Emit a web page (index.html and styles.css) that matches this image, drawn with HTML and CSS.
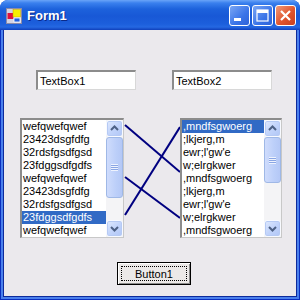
FILE: index.html
```html
<!DOCTYPE html>
<html lang="en">
<head>
    <meta charset="UTF-8">
    <title>Form1</title>
    <link rel="stylesheet" href="styles.css">
</head>
<body>
    <div class="window">
        <!-- Title bar -->
        <div class="titlebar">
            <svg class="app-icon" width="16" height="16" viewBox="0 0 16 16">
                <rect x="0.5" y="0.5" width="15" height="15" fill="#d4d4e4" stroke="#8a8aa8"/>
                <rect x="1.5" y="5" width="6" height="6" fill="#e0103c"/>
                <rect x="7" y="1.5" width="7.5" height="7.5" fill="#f8f000" stroke="#c0a000" stroke-width="0.5"/>
                <rect x="8" y="10" width="6" height="4" fill="#2060e0" stroke="#ffffff" stroke-width="0.8"/>
            </svg>
            <span class="title">Form1</span>
            <div class="caption-buttons">
                <div class="cap-btn">
                    <svg width="21" height="21" viewBox="0 0 21 21"><rect x="5" y="13" width="7" height="3" fill="#fff"/></svg>
                </div>
                <div class="cap-btn">
                    <svg width="21" height="21" viewBox="0 0 21 21"><rect x="5" y="5" width="11" height="11" fill="none" stroke="#fff" stroke-width="1.2"/><rect x="5" y="5" width="11" height="3" fill="#fff"/></svg>
                </div>
                <div class="cap-btn close">
                    <svg width="21" height="21" viewBox="0 0 21 21"><path d="M6 6 L15 15 M15 6 L6 15" stroke="#fff" stroke-width="2.2"/></svg>
                </div>
            </div>
        </div>

        <!-- Frame + client area -->
        <div class="frame">
            <div class="client">
                <div class="row-text">
                    <div class="textbox">TextBox1</div>
                    <div class="textbox">TextBox2</div>
                </div>

                <div class="row-lists">
                    <div class="listbox">
                        <div class="items">
                            <div class="item">wefqwefqwef</div>
                            <div class="item">23423dsgfdfg</div>
                            <div class="item">32rdsfgsdfgsd</div>
                            <div class="item">23fdggsdfgdfs</div>
                            <div class="item">wefqwefqwef</div>
                            <div class="item">23423dsgfdfg</div>
                            <div class="item">32rdsfgsdfgsd</div>
                            <div class="item selected">23fdggsdfgdfs</div>
                            <div class="item">wefqwefqwef</div>
                        </div>
                        <div class="scrollbar">
                            <div class="sb-btn">
                                <svg width="15" height="15" viewBox="0 0 15 15"><polyline points="4,9 7.5,5.5 11,9" fill="none" stroke="#4d6185" stroke-width="2"/></svg>
                            </div>
                            <div class="sb-track">
                                <div class="sb-thumb thumb-long"><span class="grip"></span></div>
                            </div>
                            <div class="sb-btn">
                                <svg width="15" height="15" viewBox="0 0 15 15"><polyline points="4,6 7.5,9.5 11,6" fill="none" stroke="#4d6185" stroke-width="2"/></svg>
                            </div>
                        </div>
                    </div>

                    <svg class="links" width="56" height="120" viewBox="0 0 56 120">
                        <line x1="1" y1="7" x2="56" y2="54"/>
                        <line x1="1" y1="97" x2="56" y2="9"/>
                        <line x1="1" y1="59" x2="56" y2="100"/>
                    </svg>

                    <div class="listbox narrow">
                        <div class="items">
                            <div class="item selected">,mndfsgwoerg</div>
                            <div class="item">;lkjerg,m</div>
                            <div class="item">ewr;l'gw'e</div>
                            <div class="item">w;elrgkwer</div>
                            <div class="item">,mndfsgwoerg</div>
                            <div class="item">;lkjerg,m</div>
                            <div class="item">ewr;l'gw'e</div>
                            <div class="item">w;elrgkwer</div>
                            <div class="item">,mndfsgwoerg</div>
                        </div>
                        <div class="scrollbar">
                            <div class="sb-btn">
                                <svg width="15" height="15" viewBox="0 0 15 15"><polyline points="4,9 7.5,5.5 11,9" fill="none" stroke="#4d6185" stroke-width="2"/></svg>
                            </div>
                            <div class="sb-track">
                                <div class="sb-thumb thumb-short"><span class="grip"></span></div>
                            </div>
                            <div class="sb-btn">
                                <svg width="15" height="15" viewBox="0 0 15 15"><polyline points="4,6 7.5,9.5 11,6" fill="none" stroke="#4d6185" stroke-width="2"/></svg>
                            </div>
                        </div>
                    </div>
                </div>

                <div class="row-button">
                    <div class="button"><span class="focus">Button1</span></div>
                </div>
            </div>
        </div>
    </div>
</body>
</html>
```

FILE: styles.css
```css
body {
    margin: 0;
    padding: 0;
    font-family: 'Liberation Sans', Arial, sans-serif;
    font-size: 11px;
    background-color: #ffffff;
}

.window {
    width: 300px;
    height: 300px;
    display: flex;
    flex-direction: column;
    border-radius: 8px 8px 0 0;
    overflow: hidden;
    background-color: #0a3fcf;
}

/* Title bar */
.titlebar {
    height: 30px;
    flex: none;
    display: flex;
    align-items: center;
    padding: 0 4px 0 6px;
    background: linear-gradient(#6aa4f8 0px, #3a80ee 3px, #1d62dc 9px, #1858d6 16px, #1c5fdc 24px, #2568e2 27px, #0f3fba 30px);
}

.app-icon {
    flex: none;
    margin-top: 1px;
}

.title {
    flex: 1;
    margin-left: 5px;
    color: #ffffff;
    font-family: 'Liberation Sans', Arial, sans-serif;
    font-weight: bold;
    font-size: 13px;
    text-shadow: 1px 1px 0 #0a2a8a;
}

.caption-buttons {
    display: flex;
    gap: 2px;
    margin-top: 1px;
}

.cap-btn {
    width: 21px;
    height: 21px;
    box-sizing: border-box;
    border: 1px solid #ffffff;
    border-radius: 3px;
    background: linear-gradient(135deg, #7aa6f4, #3a74e8 60%, #2f63d8);
    display: flex;
    align-items: center;
    justify-content: center;
}

.cap-btn svg {
    flex: none;
}

.cap-btn.close {
    background: linear-gradient(135deg, #f09a78, #e0552e 55%, #c8401e);
}

/* Window frame */
.frame {
    flex: 1;
    display: flex;
    border: 1px solid #0a2fc0;
    border-top: none;
    padding: 0 2px 2px 2px;
    background-color: #4a80ec;
}

.client {
    flex: 1;
    display: flex;
    flex-direction: column;
    border: 1px solid #0c2a9c;
    border-top: none;
    background-color: #ebe9ed;
}

/* Text boxes */
.row-text {
    display: flex;
    gap: 36px;
    margin-top: 40px;
    padding-left: 32px;
}

.textbox {
    width: 100px;
    height: 20px;
    box-sizing: border-box;
    background-color: #ffffff;
    border-style: solid;
    border-width: 2px 1px 1px 2px;
    border-color: #8c8c8c #d8d8d8 #d8d8d8 #8c8c8c;
    padding: 2px 0 0 2px;
    color: #000000;
    line-height: 14px;
}

/* List boxes */
.row-lists {
    display: flex;
    margin-top: 28px;
    padding-left: 16px;
}

.listbox {
    width: 104px;
    height: 120px;
    box-sizing: border-box;
    display: flex;
    background-color: #ffffff;
    border-style: solid;
    border-width: 2px 1px 1px 2px;
    border-color: #8c8c8c #c8c8c8 #c8c8c8 #8c8c8c;
}

.listbox.narrow {
    width: 102px;
}

.items {
    flex: 1;
    overflow: hidden;
}

.item {
    height: 13px;
    line-height: 13px;
    padding-left: 1px;
    white-space: nowrap;
    color: #000000;
}

.item.selected {
    background-color: #316ac5;
    color: #ffffff;
}

.scrollbar {
    width: 17px;
    flex: none;
    display: flex;
    flex-direction: column;
    background-color: #f4f4f6;
}

.sb-btn {
    height: 17px;
    box-sizing: border-box;
    border: 1px solid #f8faff;
    border-radius: 3px;
    background: linear-gradient(135deg, #e0eafe, #c2d4fb 50%, #b0c6f6);
    box-shadow: inset 0 0 0 1px #b6caf4;
    display: flex;
    align-items: center;
    justify-content: center;
}

.sb-track {
    flex: 1;
    display: flex;
    flex-direction: column;
}

.sb-thumb {
    box-sizing: border-box;
    border: 1px solid #9fb8e6;
    border-radius: 3px;
    background: linear-gradient(90deg, #cfdcfc, #bccff9 60%, #b4c8f6);
    display: flex;
    align-items: center;
    justify-content: center;
}

.thumb-long {
    height: 61px;
}

.thumb-short {
    height: 46px;
}

.grip {
    width: 7px;
    height: 7px;
    background: repeating-linear-gradient(#eef3fe 0px, #eef3fe 1px, #8aa6e4 1px, #8aa6e4 2px);
}

.links line {
    stroke: #000080;
    stroke-width: 2;
}

/* Button */
.row-button {
    display: flex;
    margin-top: 24px;
    padding-left: 113px;
}

.button {
    width: 74px;
    height: 23px;
    box-sizing: border-box;
    border: 1px solid #000000;
    background-color: #ece9e8;
    box-shadow: inset 1px 1px 0 #ffffff, inset -1px -1px 0 #8c8c8c;
    padding: 3px;
    display: flex;
}

.focus {
    flex: 1;
    border: 1px dotted #000000;
    display: flex;
    align-items: center;
    justify-content: center;
    color: #000000;
}
```
